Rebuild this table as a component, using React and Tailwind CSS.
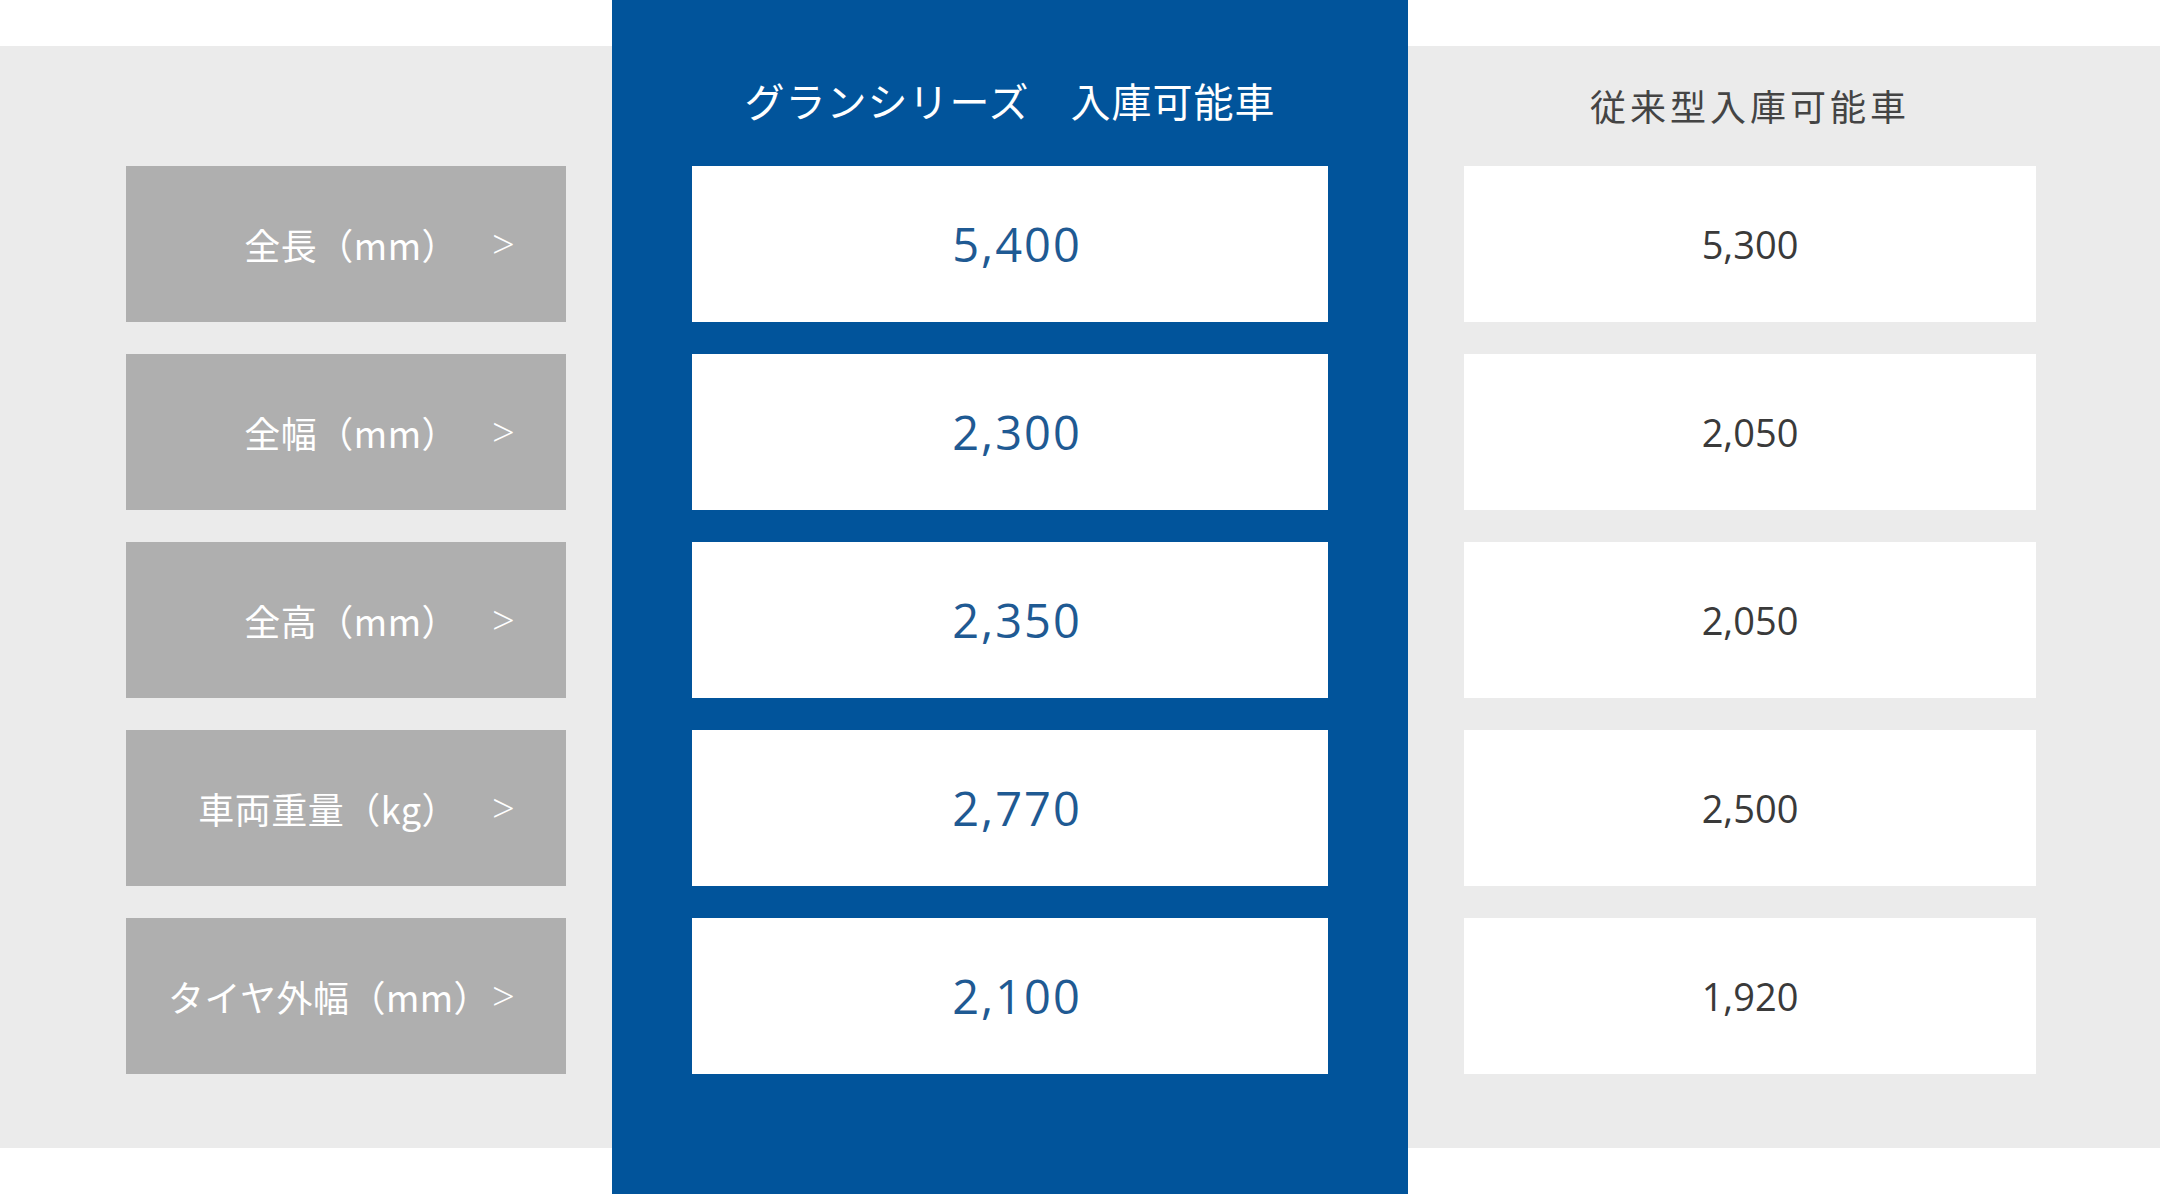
const rows = [
  { label: '全長（mm）', gran: '5,400', old: '5,300' },
  { label: '全幅（mm）', gran: '2,300', old: '2,050' },
  { label: '全高（mm）', gran: '2,350', old: '2,050' },
  { label: '車両重量（kg）', gran: '2,770', old: '2,500' },
  { label: 'タイヤ外幅（mm）', gran: '2,100', old: '1,920' },
]

const jp = { fontFamily: '"Noto Sans CJK JP", "Noto Sans", sans-serif' }
const num = { fontFamily: '"Open Sans", "Noto Sans", sans-serif' }

export default function App() {
  return (
    <div className="flex h-[1194px] w-[2160px] bg-white" style={jp}>
      {/* labels */}
      <div className="my-[46px] w-[612px] bg-[#ebebeb] pl-[126px] pt-[120px]">
        <div className="flex flex-col gap-[32px]">
          {rows.map(r => (
            <div key={r.label} className="flex h-[156px] w-[440px] items-center bg-[#afafaf] text-white">
              <span className="ml-[42px] w-[290px] whitespace-nowrap text-right text-[36px] leading-none tracking-[0.5px]">
                {r.label}
              </span>
              <span className="ml-[34px] text-[40px] font-light leading-none" style={num}>&gt;</span>
            </div>
          ))}
        </div>
      </div>

      {/* gran series */}
      <div className="flex w-[796px] flex-col bg-[#01549b] px-[80px]">
        <div className="flex h-[166px] items-center justify-center pt-[34px]">
          <h2 className="text-[40px] leading-none tracking-[1px] text-white">グランシリーズ　入庫可能車</h2>
        </div>
        <div className="flex flex-col gap-[32px]">
          {rows.map(r => (
            <div key={r.label} className="flex h-[156px] items-center justify-center bg-white">
              <span className="pl-[14px] text-[47px] leading-none tracking-[2px] text-[#1f5a93]" style={num}>
                {r.gran}
              </span>
            </div>
          ))}
        </div>
      </div>

      {/* conventional */}
      <div className="my-[46px] flex flex-1 flex-col bg-[#ebebeb] pl-[56px]">
        <div className="flex h-[120px] w-[572px] items-center justify-center pb-[2px]">
          <h2 className="text-[36px] leading-none tracking-[4px] text-[#444]">従来型入庫可能車</h2>
        </div>
        <div className="flex flex-col gap-[32px]">
          {rows.map(r => (
            <div key={r.label} className="flex h-[156px] w-[572px] items-center justify-center bg-white">
              <span className="text-[38px] leading-none text-[#3a3a3a]" style={num}>{r.old}</span>
            </div>
          ))}
        </div>
      </div>
    </div>
  )
}
